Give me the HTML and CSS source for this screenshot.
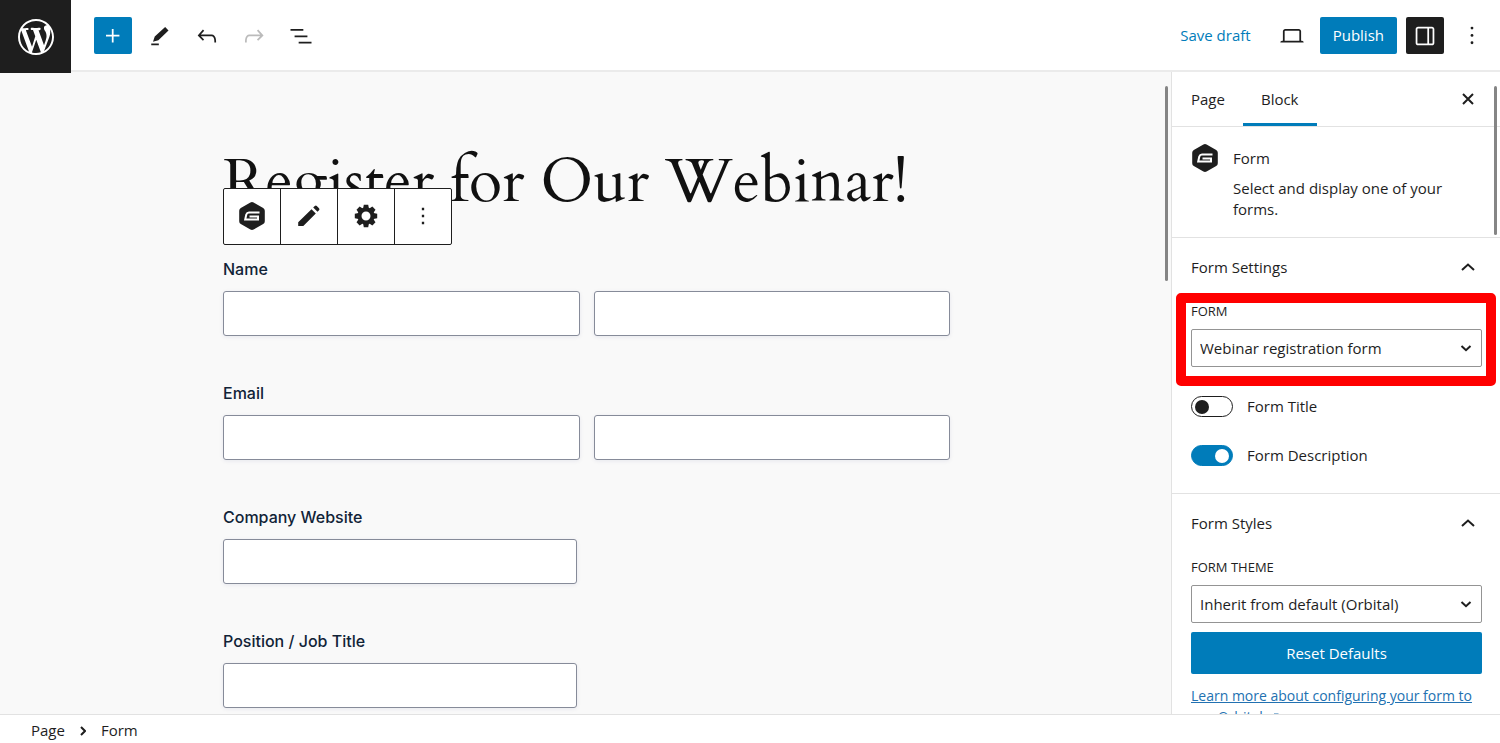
FILE: index.html
```html
<!DOCTYPE html>
<html lang="en">
<head>
<meta charset="utf-8">
<meta name="viewport" content="width=device-width, initial-scale=1">
<title>Edit Page</title>
<link rel="stylesheet" href="styles.css">
</head>
<body>
<div class="editor">
  <header class="header">
    <a class="site-logo" href="#" aria-label="View pages">
      <svg width="36" height="36" viewBox="0 0 20 20" fill="currentColor"><path d="M20 10c0-5.51-4.49-10-10-10C4.48 0 0 4.49 0 10c0 5.52 4.48 10 10 10 5.51 0 10-4.48 10-10zM7.78 15.37L4.37 6.22c.55-.02 1.17-.08 1.17-.08.5-.06.44-1.13-.06-1.11 0 0-1.45.11-2.37.11-.18 0-.37 0-.58-.01C4.12 2.69 6.87 1.11 10 1.11c2.33 0 4.45.87 6.05 2.34-.68-.11-1.65.39-1.65 1.58 0 .74.45 1.36.9 2.1.35.61.55 1.36.55 2.46 0 1.49-1.4 5-1.4 5l-3.03-8.37c.54-.02.82-.17.82-.17.5-.05.44-1.25-.06-1.22 0 0-1.44.12-2.38.12-.87 0-2.33-.12-2.33-.12-.5-.03-.56 1.2-.06 1.22l.92.08 1.26 3.41zM17.41 10c.24-.64.74-1.87.43-4.25.7 1.29 1.05 2.71 1.05 4.25 0 3.29-1.73 6.24-4.4 7.78.97-2.59 1.94-5.2 2.92-7.78zM6.1 18.09C3.12 16.65 1.11 13.53 1.11 10c0-1.3.23-2.48.72-3.59C3.25 10.3 4.67 14.2 6.1 18.09zm4.03-6.63l2.58 6.98c-.86.29-1.76.45-2.71.45-.79 0-1.57-.11-2.29-.33.81-2.38 1.62-4.74 2.42-7.1z"/></svg>
    </a>
    <div class="tools">
      <button class="icon-button primary" aria-label="Add block"><svg class="icon" viewBox="0 0 24 24"><path d="M11 12.5V17.5H12.5V12.5H17.5V11H12.5V6H11V11H6V12.500H11Z"/></svg></button>
      <button class="icon-button" aria-label="Tools"><svg class="icon" viewBox="0 0 24 24"><path d="m19.300 7.200-2.900-2.900-8.900 8.200-1.500 4.400 4.600-1.200ZM11 18.500H4.500V20H11Z"/></svg></button>
      <button class="icon-button" aria-label="Undo"><svg class="icon" viewBox="0 0 24 24"><path d="M18.300 11.700c-.6-.6-1.400-.9-2.300-.9H6.700l2.900-3.300-1.100-1-4.500 5L8.500 16l1-1-2.700-2.700H16c.5 0 .9.2 1.300.5 1 1 1 3.400 1 4.500v.3h1.500v-.2c0-1.500 0-4.300-1.500-5.700z"/></svg></button>
      <button class="icon-button" aria-label="Redo" disabled><svg class="icon" viewBox="0 0 24 24"><path d="M15.600 6.500l-1.100 1 2.900 3.300H8c-.9 0-1.700.3-2.300.9-1.400 1.500-1.400 4.200-1.400 5.600v.2h1.500v-.3c0-1.100 0-3.500 1-4.500.3-.3.7-.5 1.300-.5h9.200L14.500 15l1.100 1.100 4.600-4.600-4.600-5z"/></svg></button>
      <button class="icon-button" aria-label="Document overview"><svg class="icon" viewBox="0 0 24 24"><path d="M3 6h11v1.500H3V6Zm3.500 5.500h11V13h-11v-1.500ZM21 17H10v1.500h11V17Z"/></svg></button>
    </div>
    <div class="actions">
      <button class="save-draft">Save draft</button>
      <button class="icon-button" aria-label="Preview"><svg class="icon" viewBox="0 0 24 24"><path d="M20.500 16h-.7V8c0-1.100-.9-2-2-2H6.200c-1.100 0-2 .9-2 2v8h-.7c-.8 0-1.500.7-1.500 1.500h20c0-.8-.7-1.500-1.500-1.500zM5.700 8c0-.3.2-.5.5-.5h11.600c.3 0 .5.2.5.5v8H5.700V8z"/></svg></button>
      <button class="publish">Publish</button>
      <button class="icon-button pressed" aria-label="Settings" aria-pressed="true"><svg class="icon" viewBox="0 0 24 24"><path d="M18 4H6c-1.100 0-2 .9-2 2v12c0 1.100.9 2 2 2h12c1.100 0 2-.9 2-2V6c0-1.100-.9-2-2-2zm-4 14.500H6c-.3 0-.5-.2-.5-.5V6c0-.3.2-.5.5-.5h8v13zm4.500-.5c0 .3-.2.5-.5.5h-2.500v-13H18c.3 0 .5.2.5.5v12z"/></svg></button>
      <button class="icon-button" aria-label="Options"><svg class="icon" viewBox="0 0 24 24"><circle cx="12" cy="5.200" r="1.200"/><circle cx="12" cy="11.500" r="1.200"/><circle cx="12" cy="17.800" r="1.200"/></svg></button>
    </div>
  </header>

  <div class="body">
    <main class="canvas">
      <div class="content">
        <div class="title-wrap">
          <h1 class="title">Register for Our Webinar!</h1>
          <div class="block-toolbar" role="toolbar" aria-label="Block tools">
            <button aria-label="Form"><svg width="28" height="30" viewBox="0 0 28 30"><path fill="#1e1e1e" d="M12.400 1.500q1.600-.9 3.200 0l9.600 5.500q1.600.9 1.600 2.800v10.400q0 1.900-1.600 2.800l-9.600 5.500q-1.600.9-3.200 0L2.800 23Q1.200 22.100 1.200 20.200V9.800Q1.200 7.900 2.800 7z"/><path fill="none" stroke="#fff" stroke-width="2" d="M21.500 11.500H11q-2 0-2.700 2L7.200 18.500h12.800v-3H11.500"/></svg></button>
            <button aria-label="Edit"><svg width="26" height="26" viewBox="0 0 26 26" fill="#1e1e1e"><path d="M15.500 6.200 19.800 10.500 7.300 23H2.200V19.300ZM17.200 4.600 18.800 3q1-1 2 0l2.200 2.200q1 1 0 2l-1.500 1.600Z"/></svg></button>
            <button aria-label="Settings"><svg width="26" height="26" viewBox="-13 -13 26 26"><g fill="#1e1e1e"><path id="tooth" d="M-2.200-11.200h4.400l1 5H-3.200z"/><use href="#tooth" transform="rotate(45)"/><use href="#tooth" transform="rotate(90)"/><use href="#tooth" transform="rotate(135)"/><use href="#tooth" transform="rotate(180)"/><use href="#tooth" transform="rotate(225)"/><use href="#tooth" transform="rotate(270)"/><use href="#tooth" transform="rotate(315)"/></g><circle r="6.500" fill="none" stroke="#1e1e1e" stroke-width="4"/></svg></button>
            <button aria-label="Options"><svg class="icon" viewBox="0 0 24 24"><path d="M13 19h-2v-2h2v2zm0-6h-2v-2h2v2zm0-6h-2V5h2v2z"/></svg></button>
          </div>
        </div>
        <form class="form">
          <fieldset class="field">
            <legend>Name</legend>
            <div class="pair"><input type="text" aria-label="First name"><input type="text" aria-label="Last name"></div>
          </fieldset>
          <fieldset class="field">
            <legend>Email</legend>
            <div class="pair"><input type="email" aria-label="Email"><input type="email" aria-label="Confirm email"></div>
          </fieldset>
          <div class="field">
            <label for="website">Company Website</label>
            <input class="half" id="website" type="url">
          </div>
          <div class="field">
            <label for="job">Position / Job Title</label>
            <input class="half" id="job" type="text">
          </div>
        </form>
      </div>
      <span class="thumb canvas-thumb"></span>
    </main>

    <aside class="sidebar">
      <div class="tabs">
        <button class="tab">Page</button>
        <button class="tab active">Block</button>
        <button class="close" aria-label="Close settings"><svg width="12" height="12" viewBox="0 0 12 12"><path d="M1 1l10 10M11 1L1 11"/></svg></button>
      </div>
      <section class="card">
        <svg width="28" height="30" viewBox="0 0 28 30"><path fill="#1e1e1e" d="M12.400 1.500q1.600-.9 3.200 0l9.600 5.500q1.600.9 1.600 2.800v10.400q0 1.900-1.600 2.800l-9.600 5.500q-1.600.9-3.200 0L2.800 23Q1.200 22.100 1.200 20.200V9.800Q1.200 7.900 2.800 7z"/><path fill="none" stroke="#fff" stroke-width="2" d="M21.500 11.500H11q-2 0-2.700 2L7.200 18.500h12.800v-3H11.500"/></svg>
        <div class="card-text">
          <h2>Form</h2>
          <p>Select and display one of your forms.</p>
        </div>
      </section>
      <section class="panel">
        <button class="panel-title">Form Settings<svg width="14" height="8" viewBox="0 0 14 8"><path d="M1 7l6-5.500L13 7"/></svg></button>
        <div class="control highlighted">
          <label for="form-select">FORM</label>
          <div class="select-wrap">
            <select id="form-select"><option>Webinar registration form</option></select>
            <svg width="12" height="7" viewBox="0 0 12 7"><path d="M1.500 1L6 5.200 10.500 1"/></svg>
          </div>
        </div>
        <div class="toggles">
          <label class="toggle"><input type="checkbox">Form Title</label>
          <label class="toggle"><input type="checkbox" checked>Form Description</label>
        </div>
      </section>
      <section class="panel">
        <button class="panel-title">Form Styles<svg width="14" height="8" viewBox="0 0 14 8"><path d="M1 7l6-5.500L13 7"/></svg></button>
        <div class="control">
          <label for="theme-select">FORM THEME</label>
          <div class="select-wrap">
            <select id="theme-select"><option>Inherit from default (Orbital)</option></select>
            <svg width="12" height="7" viewBox="0 0 12 7"><path d="M1.500 1L6 5.200 10.500 1"/></svg>
          </div>
        </div>
        <button class="reset">Reset Defaults</button>
        <a class="learn" href="#">Learn more about configuring your form to use Orbital <svg width="14" height="14" viewBox="0 0 14 14"><path d="M5 4H1.500v9H12V10M8 3h4.500V7.500M12.500 3L6 9.500"/></svg></a>
      </section>
      <span class="thumb sidebar-thumb"></span>
    </aside>
  </div>

  <footer class="footer">
    <nav class="crumbs" aria-label="Block breadcrumb">
      <a href="#">Page</a>
      <svg width="6" height="10" viewBox="0 0 6 10"><path d="M1 1l4 4-4 4"/></svg>
      <a href="#">Form</a>
    </nav>
  </footer>
</div>
</body>
</html>
```
FILE: styles.css
```css
:root {
  --blue: #007cba;
  --ink: #1e1e1e;
  --line: #e2e2e2;
}

*,
*::before,
*::after {
  box-sizing: border-box;
}

body {
  margin: 0;
  font-family: "Segoe UI", "Open Sans", "Noto Sans", sans-serif;
  font-size: 15px;
  line-height: 21px;
  color: var(--ink);
  background: #fff;
}

button,
input,
select {
  font: inherit;
  color: inherit;
}

button {
  border: 0;
  padding: 0;
  background: none;
}

h1,
h2,
p,
fieldset {
  margin: 0;
  padding: 0;
  border: 0;
  font: inherit;
}

.editor {
  display: flex;
  flex-direction: column;
  height: 100vh;
  overflow: hidden;
}

/* Top bar */
.header {
  display: flex;
  align-items: flex-start;
  border-bottom: 2px solid #ebebeb;
  height: 72px;
  flex: none;
}

.site-logo {
  display: grid;
  place-items: center;
  width: 71px;
  height: 73px;
  flex: none;
  background: var(--ink);
  color: #fff;
  position: relative;
  z-index: 1;
}

.tools {
  display: flex;
  gap: 9px;
  padding: 17px 0 0 23px;
}

.icon-button {
  display: grid;
  place-items: center;
  width: 38px;
  height: 37px;
  border-radius: 2px;
}

.icon {
  width: 28px;
  height: 28px;
  fill: currentColor;
}

.icon-button:disabled {
  color: #bbb;
}

.primary {
  background: var(--blue);
  color: #fff;
}

.pressed {
  background: var(--ink);
  color: #fff;
}

.actions {
  display: flex;
  align-items: center;
  gap: 9px;
  margin-left: auto;
  padding: 17px 9px 0 0;
}

.save-draft {
  color: var(--blue);
  padding: 0 13px;
}

.publish {
  height: 37px;
  padding: 0 13px;
  border-radius: 2px;
  background: var(--blue);
  color: #fff;
}

/* Page canvas */
.body {
  display: flex;
  flex: 1;
  min-height: 0;
}

.canvas {
  position: relative;
  flex: 1;
  min-width: 0;
  padding-left: 2px;
  overflow: hidden;
  background: #f9f9f9;
}

.content {
  max-width: 727px;
  margin: 0 auto;
  padding-top: 70px;
}

.title-wrap {
  position: relative;
}

.title {
  font-family: Cardo, "Liberation Serif", serif;
  font-size: 61px;
  line-height: 80px;
  color: #111;
  white-space: nowrap;
}

.block-toolbar {
  position: absolute;
  left: 0;
  top: 46px;
  display: flex;
  border: 1px solid var(--ink);
  border-radius: 2px;
  background: #fff;
}

.block-toolbar button {
  display: grid;
  place-items: center;
  width: 57px;
  height: 55px;
  padding-bottom: 2px;
}

.block-toolbar button:first-child {
  width: 56px;
}

.block-toolbar button + button {
  border-left: 1px solid var(--ink);
}

.form {
  display: flex;
  flex-direction: column;
  gap: 46px;
  margin-top: 36px;
  font-family: Inter, sans-serif;
  font-size: 16px;
  font-weight: 500;
  line-height: 22px;
  color: #112337;
}

.field legend,
.field label {
  display: block;
  padding: 0;
  margin-bottom: 11px;
}

.field input {
  display: block;
  width: 100%;
  height: 45px;
  padding: 0 12px;
  border: 1px solid #868b99;
  border-radius: 3px;
  background: #fff;
  box-shadow: 0 1px 4px rgba(18, 25, 97, 0.08);
}

.pair {
  display: grid;
  grid-template-columns: 1fr 1fr;
  gap: 14px;
}

.field .half {
  width: 354px;
}

.thumb {
  position: absolute;
  top: 14px;
  width: 3px;
  border-radius: 2px;
  background: #858585;
}

.canvas-thumb {
  right: 3px;
  height: 195px;
}

.sidebar-thumb {
  right: 3px;
  height: 149px;
}

/* Settings sidebar */
.sidebar {
  position: relative;
  width: 329px;
  flex: none;
  overflow: hidden;
  border-left: 1px solid var(--line);
}

.tabs {
  display: flex;
  height: 55px;
  border-bottom: 1px solid var(--line);
}

.tab {
  padding: 0 18px 0 19px;
}

.tab.active {
  border-bottom: 3px solid var(--blue);
  padding: 3px 18px 0;
}

.close {
  margin-left: auto;
  padding: 0 26px;
}

.close svg,
.panel-title svg,
.select-wrap svg,
.crumbs svg {
  fill: none;
  stroke: var(--ink);
  stroke-width: 2;
}

.card {
  display: flex;
  align-items: flex-start;
  gap: 14px;
  padding: 16px 19px 17px;
}

.card-text {
  padding-top: 5px;
}

.card h2 {
  margin-bottom: 9px;
}

.card p {
  max-width: 230px;
}

.panel {
  border-top: 1px solid var(--line);
  padding: 0 18px 0 19px;
}

.panel-title {
  display: flex;
  align-items: center;
  justify-content: space-between;
  width: 100%;
  height: 58px;
  padding-right: 7px;
}

.control {
  position: relative;
  padding-top: 6px;
}

.control label {
  display: block;
  margin-bottom: 9px;
  font-size: 13px;
  line-height: 18px;
}

.highlighted::after {
  content: "";
  position: absolute;
  inset: -3px -14px -19px -15px;
  border: 10px solid #f00;
  border-radius: 5px;
  pointer-events: none;
}

.select-wrap {
  display: grid;
  align-items: center;
}

.select-wrap > * {
  grid-area: 1 / 1;
}

.select-wrap svg {
  justify-self: end;
  margin-right: 10px;
  pointer-events: none;
}

.select-wrap select {
  appearance: none;
  width: 100%;
  height: 38px;
  padding: 0 28px 0 8px;
  border: 1px solid #949494;
  border-radius: 2px;
  background: #fff;
}

.toggles {
  display: grid;
  gap: 28px;
  padding: 29px 0 27px;
}

.toggle {
  display: flex;
  align-items: center;
  gap: 14px;
}

.toggle input {
  appearance: none;
  display: flex;
  align-items: center;
  width: 42px;
  height: 21px;
  margin: 0;
  padding: 0 3px;
  border: 1px solid var(--ink);
  border-radius: 11px;
}

.toggle input::before {
  content: "";
  width: 14px;
  height: 14px;
  border-radius: 50%;
  background: var(--ink);
}

.toggle input:checked {
  justify-content: flex-end;
  border-color: var(--blue);
  background: var(--blue);
}

.toggle input:checked::before {
  background: #fff;
}

.reset {
  display: block;
  width: 100%;
  height: 42px;
  margin: 9px 0 11px;
  border-radius: 2px;
  background: var(--blue);
  color: #fff;
}

.learn {
  display: block;
  font-size: 14px;
  color: #2271b1;
}

.learn svg {
  fill: none;
  stroke: currentColor;
  vertical-align: -3px;
}

/* Breadcrumb bar */
.footer {
  flex: none;
  height: 29px;
  border-top: 1px solid var(--line);
}

.crumbs {
  display: flex;
  align-items: center;
  gap: 15px;
  padding: 5px 31px;
}

.crumbs a {
  color: inherit;
  text-decoration: none;
}
```
